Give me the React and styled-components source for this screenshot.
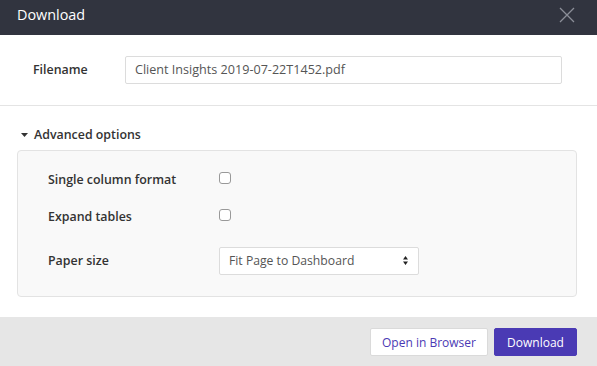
import React from "react";
import styled, { createGlobalStyle } from "styled-components";

const Global = createGlobalStyle`
  html, body { margin: 0; padding: 0; background: #ffffff; }
  body { font-family: "Open Sans", "Liberation Sans", sans-serif; color: #333; }
  * { box-sizing: border-box; }
`;

const Dialog = styled.div`
  width: 597px;
  height: 366px;
  display: flex;
  flex-direction: column;
  background: #fff;
`;

const Header = styled.div`
  height: 35px;
  background: #31343f;
  display: flex;
  align-items: center;
  justify-content: space-between;
  padding: 0 22px 0 17px;
`;

const Title = styled.div`
  color: #fff;
  font-size: 14.4px;
  line-height: 20px;
  margin-top: -4px;
`;

const Close = styled.button`
  border: 0;
  background: transparent;
  padding: 0;
  width: 16px;
  height: 16px;
  display: flex;
  margin-top: -4px;
  cursor: pointer;
`;

const FileRow = styled.div`
  display: flex;
  align-items: center;
  padding: 21px 35px 21px 33px;
  border-bottom: 1px solid #e4e4e4;
`;

const Label = styled.div`
  font-size: 12.4px;
  font-weight: 600;
  color: #333;
  width: ${(p) => p.$w}px;
  flex: none;
`;

const TextInput = styled.div`
  flex: 1;
  height: 28px;
  border: 1px solid #dcdcdc;
  border-radius: 2px;
  display: flex;
  align-items: center;
  padding: 0 9px;
  font-size: 12.6px;
  color: #555;
`;

const Section = styled.div`
  padding: 20px 20px 20px 17px;
`;

const Toggle = styled.div`
  display: flex;
  align-items: center;
  gap: 6px;
  padding-left: 4px;
  height: 18px;
  margin-bottom: 6px;
  font-size: 12.4px;
  font-weight: 600;
  color: #333;
`;

const Panel = styled.div`
  background: #f9f9f9;
  border: 1px solid #e3e3e3;
  border-radius: 4px;
  padding: 10px 30px 21px;
  display: flex;
  flex-direction: column;
`;

const OptRow = styled.div`
  display: flex;
  align-items: center;
  height: ${(p) => p.$h}px;
  margin-top: ${(p) => p.$mt || 0}px;
`;

const Check = styled.span`
  width: 12px;
  height: 12px;
  border: 1px solid #999;
  border-radius: 3px;
  background: #fff;
  margin-top: -2px;
`;

const Select = styled.div`
  width: 200px;
  height: 28px;
  background: #fff;
  border: 1px solid #dcdcdc;
  border-radius: 2px;
  display: flex;
  align-items: center;
  justify-content: space-between;
  padding: 0 10px 0 9px;
  font-size: 12.2px;
  color: #555;
`;

const Footer = styled.div`
  margin-top: auto;
  height: 50px;
  background: #e6e6e6;
  display: flex;
  align-items: center;
  justify-content: flex-end;
  gap: 6px;
  padding: 2px 20px 0 0;
`;

const Button = styled.button`
  height: 28px;
  width: ${(p) => p.$w}px;
  border-radius: 2px;
  font-family: "Open Sans", "Liberation Sans", sans-serif;
  font-size: 12px;
  padding: 0;
  cursor: pointer;
  border: 1px solid ${(p) => (p.$primary ? "#4a3ab4" : "#dadada")};
  background: ${(p) => (p.$primary ? "#4a3ab4" : "#ffffff")};
  color: ${(p) => (p.$primary ? "#ffffff" : "#4a3ab4")};
`;

export default function App() {
  return (
    <>
      <Global />
      <Dialog>
        <Header>
          <Title>Download</Title>
          <Close aria-label="Close">
            <svg width="16" height="16" viewBox="0 0 16 16">
              <path d="M1 1 L15 15 M15 1 L1 15" stroke="#8b8e98" strokeWidth="1.3" fill="none" />
            </svg>
          </Close>
        </Header>
        <FileRow>
          <Label $w={92}>Filename</Label>
          <TextInput>Client Insights 2019-07-22T1452.pdf</TextInput>
        </FileRow>
        <Section>
          <Toggle>
            <svg width="7" height="4" viewBox="0 0 7 4">
              <path d="M0 0 L7 0 L3.5 4 Z" fill="#333" />
            </svg>
            Advanced options
          </Toggle>
          <Panel>
            <OptRow $h={37}>
              <Label $w={171}>Single column format</Label>
              <Check />
            </OptRow>
            <OptRow $h={37}>
              <Label $w={171}>Expand tables</Label>
              <Check />
            </OptRow>
            <OptRow $h={28} $mt={12}>
              <Label $w={171}>Paper size</Label>
              <Select>
                Fit Page to Dashboard
                <svg width="5" height="9" viewBox="0 0 5 9">
                  <path d="M0 3.5 L2.5 0 L5 3.5 Z M0 5.5 L2.5 9 L5 5.5 Z" fill="#222" />
                </svg>
              </Select>
            </OptRow>
          </Panel>
        </Section>
        <Footer>
          <Button $w={118}>Open in Browser</Button>
          <Button $w={83} $primary>Download</Button>
        </Footer>
      </Dialog>
    </>
  );
}
